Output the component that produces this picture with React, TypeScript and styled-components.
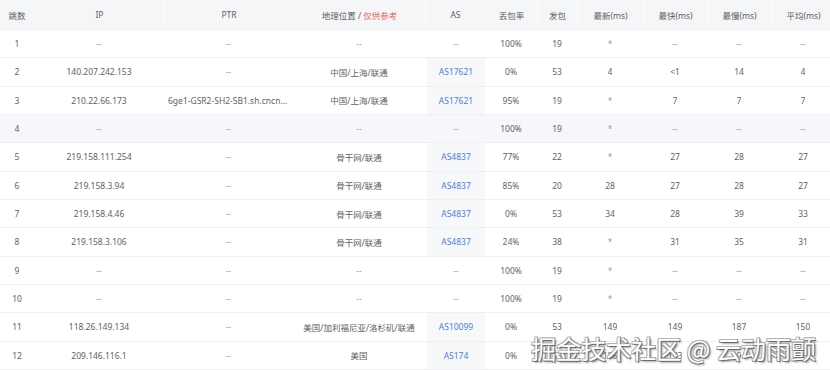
import React from "react";
import styled, { createGlobalStyle } from "styled-components";

const GlobalStyle = createGlobalStyle`
  html, body {
    margin: 0;
    padding: 0;
    background: #ffffff;
    overflow: hidden;
  }
  body {
    font-family: "Noto Sans", "Noto Sans CJK SC", sans-serif;
  }
`;

const COLUMNS = "34px 130px 129px 132px 60px 52px 40px 66px 64px 64px 64px";

const Page = styled.div`
  position: relative;
  width: 830px;
  height: 370px;
  overflow: hidden;
`;

const Table = styled.div`
  width: 835px;
  font-size: 8.5px;
  color: #5f6266;
`;

const HeadRow = styled.div`
  display: grid;
  grid-template-columns: ${COLUMNS};
  height: 30px;
  background: #f5f6f8;
  border-bottom: 1px solid #eceef2;
  box-sizing: border-box;
`;

const HeadCell = styled.div`
  display: flex;
  align-items: center;
  justify-content: center;
  border-left: 1px solid #fbfbfc;
  color: #5c5f63;
  white-space: nowrap;

  &:first-child {
    border-left: none;
  }
`;

const Hint = styled.span`
  color: #f0645f;
  margin-left: 2px;
`;

const Row = styled.div<{ $hover?: boolean }>`
  display: grid;
  grid-template-columns: ${COLUMNS};
  height: 28.33px;
  box-sizing: border-box;
  border-bottom: 1px solid #eef0f3;
  background: ${(p) => (p.$hover ? "#f5f7fa" : "#ffffff")};
`;

const Cell = styled.div<{ $muted?: boolean }>`
  display: flex;
  align-items: center;
  justify-content: center;
  padding: 0 4px;
  min-width: 0;
  color: ${(p) => (p.$muted ? "#9a9ca0" : "#5f6266")};
  white-space: nowrap;
`;

const Clip = styled.span`
  overflow: hidden;
  text-overflow: ellipsis;
  white-space: nowrap;
  max-width: 100%;
`;

const AsCell = styled(Cell)<{ $linked?: boolean }>`
  background: ${(p) => (p.$linked ? "#f7f8fa" : "transparent")};
  color: ${(p) => (p.$linked ? "#4e7fe2" : "#9a9ca0")};
  margin-left: 2px;
`;

const Watermark = styled.div`
  position: absolute;
  right: 14px;
  bottom: 9px;
  font-family: "Noto Sans CJK SC", "Noto Sans", sans-serif;
  font-size: 25px;
  line-height: 1;
  color: #ffffff;
  letter-spacing: 0;
  white-space: nowrap;
  text-shadow: 1px 1px 0 #6b6b6b, -1px -1px 0 #b5b5b5, 1px -1px 0 #999,
    -1px 1px 0 #999, 2px 2px 2px rgba(0, 0, 0, 0.35);
`;

interface Hop {
  hop: number;
  ip: string;
  ptr: string;
  geo: string;
  as: string;
  loss: string;
  sent: number;
  last: string;
  best: string;
  worst: string;
  avg: string;
}

const hops: Hop[] = [
  { hop: 1, ip: "--", ptr: "--", geo: "--", as: "--", loss: "100%", sent: 19, last: "*", best: "--", worst: "--", avg: "--" },
  { hop: 2, ip: "140.207.242.153", ptr: "--", geo: "中国/上海/联通", as: "AS17621", loss: "0%", sent: 53, last: "4", best: "<1", worst: "14", avg: "4" },
  { hop: 3, ip: "210.22.66.173", ptr: "6ge1-GSR2-SH2-SB1.sh.cncnet.net", geo: "中国/上海/联通", as: "AS17621", loss: "95%", sent: 19, last: "*", best: "7", worst: "7", avg: "7" },
  { hop: 4, ip: "--", ptr: "--", geo: "--", as: "--", loss: "100%", sent: 19, last: "*", best: "--", worst: "--", avg: "--" },
  { hop: 5, ip: "219.158.111.254", ptr: "--", geo: "骨干网/联通", as: "AS4837", loss: "77%", sent: 22, last: "*", best: "27", worst: "28", avg: "27" },
  { hop: 6, ip: "219.158.3.94", ptr: "--", geo: "骨干网/联通", as: "AS4837", loss: "85%", sent: 20, last: "28", best: "27", worst: "28", avg: "27" },
  { hop: 7, ip: "219.158.4.46", ptr: "--", geo: "骨干网/联通", as: "AS4837", loss: "0%", sent: 53, last: "34", best: "28", worst: "39", avg: "33" },
  { hop: 8, ip: "219.158.3.106", ptr: "--", geo: "骨干网/联通", as: "AS4837", loss: "24%", sent: 38, last: "*", best: "31", worst: "35", avg: "31" },
  { hop: 9, ip: "--", ptr: "--", geo: "--", as: "--", loss: "100%", sent: 19, last: "*", best: "--", worst: "--", avg: "--" },
  { hop: 10, ip: "--", ptr: "--", geo: "--", as: "--", loss: "100%", sent: 19, last: "*", best: "--", worst: "--", avg: "--" },
  { hop: 11, ip: "118.26.149.134", ptr: "--", geo: "美国/加利福尼亚/洛杉矶/联通", as: "AS10099", loss: "0%", sent: 53, last: "149", best: "149", worst: "187", avg: "150" },
  { hop: 12, ip: "209.146.116.1", ptr: "--", geo: "美国", as: "AS174", loss: "0%", sent: 53, last: "186", best: "173", worst: "194", avg: "178" },
];

const muted = (v: string) => v === "--" || v === "*";

function Value({ v }: { v: string }) {
  return (
    <Cell $muted={muted(v)}>
      <Clip>{v}</Clip>
    </Cell>
  );
}

export default function App() {
  return (
    <Page>
      <GlobalStyle />
      <Table>
        <HeadRow>
          <HeadCell>跳数</HeadCell>
          <HeadCell>IP</HeadCell>
          <HeadCell>PTR</HeadCell>
          <HeadCell>
            地理位置 /<Hint>仅供参考</Hint>
          </HeadCell>
          <HeadCell>AS</HeadCell>
          <HeadCell>丢包率</HeadCell>
          <HeadCell>发包</HeadCell>
          <HeadCell>最新(ms)</HeadCell>
          <HeadCell>最快(ms)</HeadCell>
          <HeadCell>最慢(ms)</HeadCell>
          <HeadCell>平均(ms)</HeadCell>
        </HeadRow>
        {hops.map((h) => (
          <Row key={h.hop} $hover={h.hop === 4}>
            <Cell>{h.hop}</Cell>
            <Value v={h.ip} />
            <Value v={h.ptr} />
            <Value v={h.geo} />
            <AsCell $linked={h.as !== "--"}>{h.as}</AsCell>
            <Value v={h.loss} />
            <Value v={String(h.sent)} />
            <Value v={h.last} />
            <Value v={h.best} />
            <Value v={h.worst} />
            <Value v={h.avg} />
          </Row>
        ))}
      </Table>
      <Watermark>掘金技术社区 @ 云动雨颤</Watermark>
    </Page>
  );
}
